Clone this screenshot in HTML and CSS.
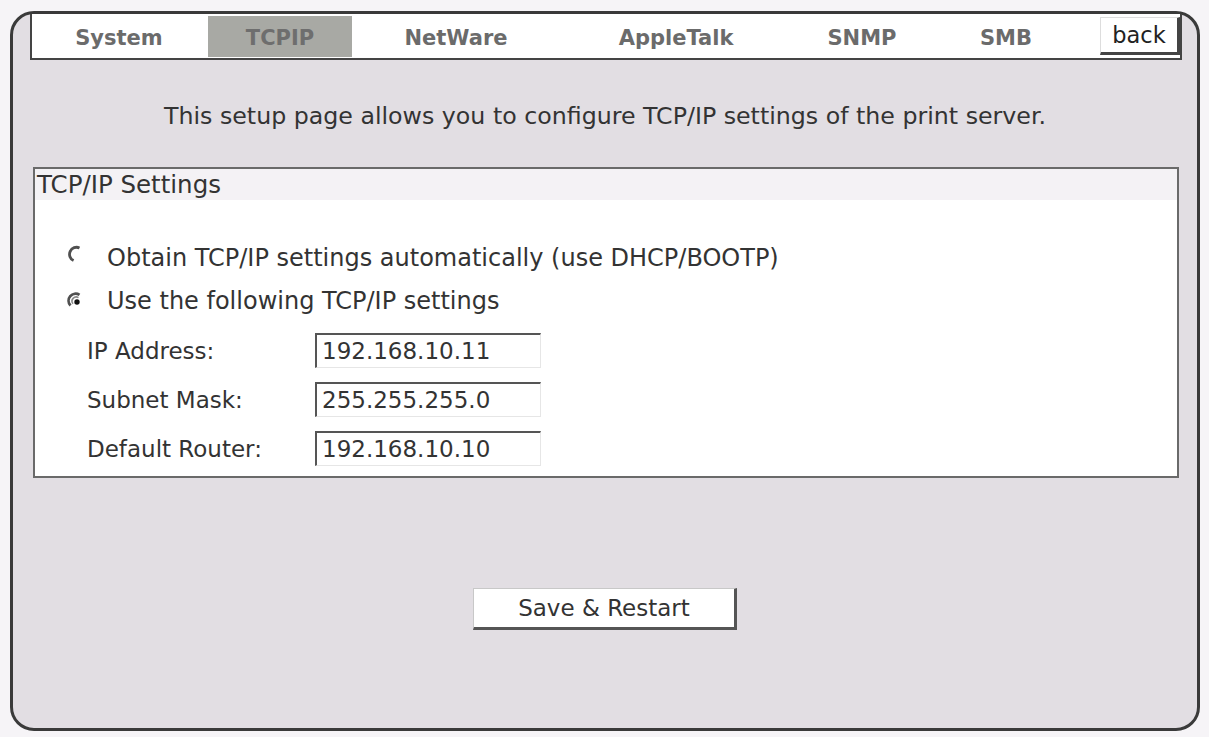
FILE: index.html
```html
<!DOCTYPE html>
<html lang="en">
<head>
  <meta charset="UTF-8" />
  <title>TCP/IP Setup</title>
  <link rel="stylesheet" href="styles.css">
</head>
<body>
  <div class="frame">
    <nav class="tabbar">
      <a class="tab tab-system">System</a>
      <a class="tab tab-tcpip active">TCPIP</a>
      <a class="tab tab-netware">NetWare</a>
      <a class="tab tab-appletalk">AppleTalk</a>
      <a class="tab tab-snmp">SNMP</a>
      <a class="tab tab-smb">SMB</a>
      <button class="back" onclick="history.back()">back</button>
    </nav>

    <p class="intro">This setup page allows you to configure TCP/IP settings of the print server.</p>

    <div class="panel">
      <div class="panel-head">TCP/IP Settings</div>
      <div class="panel-body">
        <label class="opt">
          <svg class="radio radio-off" width="18" height="18" viewBox="0 0 18 18">
            <path d="M12.5 2.9 A7 7 0 1 0 6.6 15.6" fill="none" stroke="#505050" stroke-width="2.8"/>
          </svg>
          Obtain TCP/IP settings automatically (use DHCP/BOOTP)
        </label>
        <label class="opt opt-second">
          <svg class="radio" width="18" height="18" viewBox="0 0 18 18">
            <path d="M12.5 2.9 A7 7 0 0 0 3.5 13.5" fill="none" stroke="#505050" stroke-width="2.8"/>
            <path d="M11.5 5.6 A4.2 4.2 0 0 0 6 11.8" fill="none" stroke="#8a8a8a" stroke-width="1.6"/>
            <circle cx="10" cy="10" r="2.7" fill="#111"/>
          </svg>
          Use the following TCP/IP settings
        </label>

        <div class="field">
          <span class="field-label">IP Address:</span>
          <input class="field-input" type="text" value="192.168.10.11">
        </div>
        <div class="field">
          <span class="field-label">Subnet Mask:</span>
          <input class="field-input" type="text" value="255.255.255.0">
        </div>
        <div class="field">
          <span class="field-label">Default Router:</span>
          <input class="field-input" type="text" value="192.168.10.10">
        </div>
      </div>
    </div>

    <div class="actions">
      <button class="btn">Save &amp; Restart</button>
    </div>
  </div>
</body>
</html>
```

FILE: styles.css
```css
:root {
  --page-bg: #f6f4f7;
  --frame-bg: #e2dee3;
  --dark: #3a3a3a;
  --text: #333;
  --tab-text: #6b6b6b;
  --tab-active: #a8a9a4;
}
* { box-sizing: border-box; margin:0; padding:0; }
body {
  font-family:'DejaVu Sans', Verdana, sans-serif;
  font-size:23px;
  color:var(--text);
  background:var(--page-bg);
}
.frame {
  margin:11px 9px 0 10px;
  height:720px;
  border:3px solid var(--dark);
  border-radius:24px;
  background:var(--frame-bg);
}

/* tab strip */
.tabbar {
  display:flex; align-items:stretch; gap:2px;
  height:46px;
  margin:0 15px 0 17px;
  padding:2px 0 1px 0;
  background:#fff;
  border:2px solid #444; border-top:none;
}
.tab {
  display:flex; align-items:center; justify-content:center;
  padding-top:2px;
  font-size:21px; font-weight:700;
  color:var(--tab-text);
  cursor:pointer;
}
.tab.active { background:var(--tab-active); color:#6e6e6e; }
.tab-system { width:174px; }
.tab-tcpip { width:144px; }
.tab-netware { width:204px; }
.tab-appletalk { width:232px; }
.tab-snmp { width:136px; }
.tab-smb { width:148px; }
.back {
  margin:1px 0 2px auto;
  width:80px;
  font-family:inherit; font-size:22.5px; color:#222;
  background:#fff;
  border:1px solid #ddd; border-right:3px solid #444; border-bottom:3px solid #444;
  cursor:pointer;
}

.intro { margin-top:44px; text-align:center; line-height:24px; font-size:23.7px; }

/* settings box */
.panel {
  margin:39px 18px 0 20px;
  border:2px solid #6a6a6a;
  background:#fff;
}
.panel-head {
  height:31px; line-height:31px;
  padding-left:2px;
  font-size:24.5px;
  background:#f4f2f5;
}
.panel-body { padding:45px 0 10px 0; }
.opt { display:flex; align-items:center; height:26px; padding-left:32px; font-size:24px; cursor:pointer; }
.opt-second { margin-top:17px; }
.radio { flex:none; margin-right:22px; }
.radio-off { margin-bottom:8px; }
.field { display:flex; align-items:center; height:35px; margin-top:14px; padding-left:52px; }
.opt-second + .field { margin-top:19px; }
.field-label { width:228px; }
.field-input {
  width:226px; height:35px;
  padding-left:5px;
  font-family:inherit; font-size:23px; color:var(--text);
  background:#fff;
  border:1px solid #e6e6e6; border-top:2px solid #555; border-left:2px solid #555;
  outline:none;
}

.actions { text-align:center; margin-top:110px; }
.btn {
  width:264px; height:42px;
  font-family:inherit; font-size:23px; color:var(--text);
  background:#fff;
  border:1px solid #c8c8c8; border-right:3px solid #555; border-bottom:3px solid #555;
  cursor:pointer;
}
```
